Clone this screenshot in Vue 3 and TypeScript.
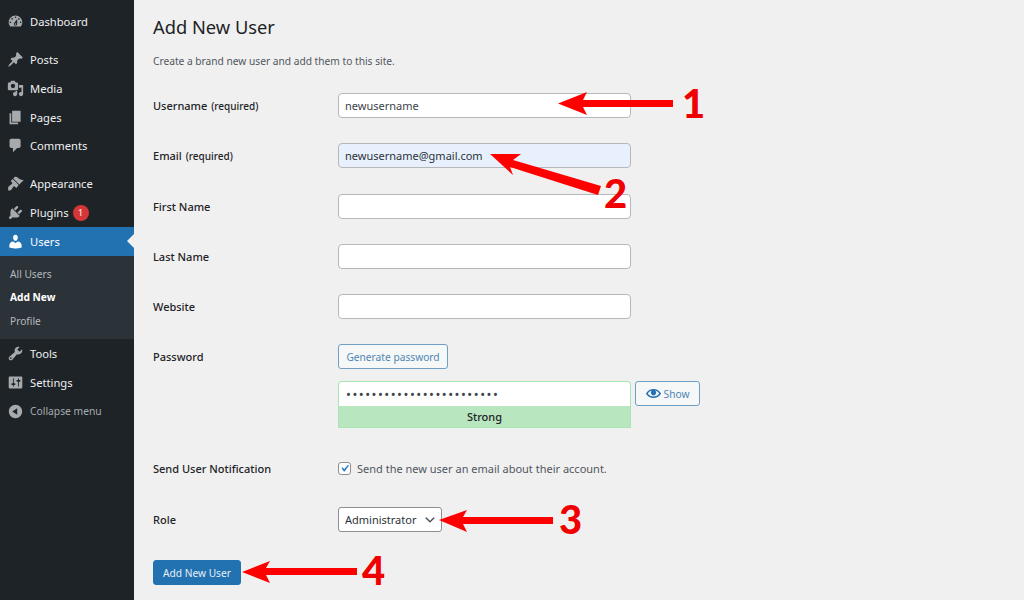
<script setup lang="ts">
interface MenuItem {
  label: string
  icon: string
  gap?: boolean
  badge?: string
  current?: boolean
}

const icons = {
  dashboard: 'M3.76 16h12.48c1.1-1.37 1.76-3.11 1.76-5 0-4.42-3.58-8-8-8s-8 3.58-8 8c0 1.89.66 3.63 1.76 5zM10 4c.55 0 1 .45 1 1s-.45 1-1 1-1-.45-1-1 .45-1 1-1zM6 6c.55 0 1 .45 1 1s-.45 1-1 1-1-.45-1-1 .45-1 1-1zm8 0c.55 0 1 .45 1 1s-.45 1-1 1-1-.45-1-1 .45-1 1-1zm-5.37 5.55L12 7v6c0 1.1-.9 2-2 2s-2-.9-2-2c0-.57.24-1.08.63-1.45zM4 10c.55 0 1 .45 1 1s-.45 1-1 1-1-.45-1-1 .45-1 1-1zm12 0c.55 0 1 .45 1 1s-.45 1-1 1-1-.45-1-1 .45-1 1-1zm-5 3c0-.55-.45-1-1-1s-1 .45-1 1 .45 1 1 1 1-.45 1-1z',
  posts: 'M10.44 3.02l1.82-1.82 6.36 6.35-1.83 1.82c-1.05-.68-2.48-.57-3.41.36l-.75.75c-.92.93-1.04 2.35-.35 3.41l-1.83 1.82-2.41-2.41-2.8 2.79c-.42.42-3.38 2.71-3.8 2.29s1.86-3.39 2.28-3.81l2.79-2.79L4.1 9.36l1.83-1.82c1.05.69 2.48.57 3.4-.36l.75-.75c.93-.92 1.05-2.35.36-3.41z',
  media: 'M13 11V4c0-.55-.45-1-1-1h-1.67L9 1H5L3.67 3H2c-.55 0-1 .45-1 1v7c0 .55.45 1 1 1h10c.55 0 1-.45 1-1zM7 4.5c1.38 0 2.5 1.12 2.5 2.5S8.38 9.5 7 9.5 4.5 8.38 4.5 7 5.62 4.5 7 4.5zM14 6h5v10.5c0 1.38-1.12 2.5-2.5 2.5S14 17.88 14 16.5s1.12-2.5 2.5-2.5c.17 0 .34.02.5.05V9h-3V6zm-4 8.05V13h2v3.5c0 1.38-1.12 2.5-2.5 2.5S7 17.88 7 16.5 8.12 14 9.5 14c.17 0 .34.02.5.05z',
  pages: 'M6 15V2h10v13H6zm-1 1h8v2H3V5h2v11z',
  comments: 'M5 2h9c1.1 0 2 .9 2 2v7c0 1.1-.9 2-2 2h-2l-5 5v-5H5c-1.1 0-2-.9-2-2V4c0-1.1.9-2 2-2z',
  appearance: 'M14.48 11.06L7.41 3.99l1.5-1.5c.5-.56 2.3-.47 3.51.32 1.21.8 1.43 1.28 2.91 2.1 1.18.64 2.45 1.26 4.45.85zm-.71.71L6.7 4.7 4.93 6.47c-.39.39-.39 1.02 0 1.41l1.06 1.06c.39.39.39 1.03 0 1.42-.6.6-1.43 1.11-2.21 1.69-.35.26-.7.53-1.01.84C1.43 13.23.99 15.01 1.5 18c.86.91 2.89.01 3.52-.64.52-.52.66-1.07 1.01-1.54.58-.78 1.09-1.61 1.69-2.21.39-.39 1.03-.39 1.42 0l1.06 1.06c.39.39 1.02.39 1.41 0z',
  plugins: 'M13.11 4.36L9.87 7.6 8 5.73l3.24-3.24c.35-.34 1.05-.2 1.56.32.52.51.66 1.21.31 1.55zm-8 1.77l.91-1.12 9.01 9.01-1.19.84c-.71.71-2.63 1.16-3.82 1.16H6.14L4.9 17.26c-.59.59-1.54.59-2.12 0-.59-.58-.59-1.53 0-2.12l1.24-1.24v-3.88c0-1.13.4-3.19 1.09-3.89zm7.26 3.97l3.24-3.24c.34-.35 1.04-.21 1.55.31.52.51.66 1.21.31 1.55l-3.24 3.25z',
  users: 'M10 9.25c-2.27 0-2.73-3.44-2.73-3.44C7 4.02 7.82 2 9.97 2c2.16 0 2.98 2.02 2.71 3.81 0 0-.41 3.44-2.68 3.44zm0 2.57L12.72 10c2.39 0 4.52 2.33 4.52 4.53v2.49s-3.65 1.13-7.24 1.13c-3.65 0-7.24-1.13-7.24-1.13v-2.49c0-2.25 1.94-4.48 4.47-4.48z',
  tools: 'M16.68 9.77c-1.34 1.34-3.3 1.67-4.95.99l-5.41 6.52c-.99.99-2.59.99-3.58 0s-.99-2.59 0-3.57l6.52-5.42c-.68-1.65-.35-3.61.99-4.95 1.28-1.28 3.12-1.62 4.72-1.06l-2.89 2.89 2.82 2.82 2.86-2.87c.53 1.58.18 3.39-1.08 4.65zM3.81 16.21c.4.39 1.04.39 1.43 0 .4-.4.4-1.04 0-1.43-.39-.4-1.03-.4-1.43 0-.39.39-.39 1.03 0 1.43z',
  settings: 'M18 16V4c0-.55-.45-1-1-1H3c-.55 0-1 .45-1 1v12c0 .55.45 1 1 1h14c.55 0 1-.45 1-1zM8 11h1c.55 0 1 .45 1 1s-.45 1-1 1H8v1.5c0 .28-.22.5-.5.5s-.5-.22-.5-.5V13H6c-.55 0-1-.45-1-1s.45-1 1-1h1V5.5c0-.28.22-.5.5-.5s.5.22.5.5V11zm5-2h-1c-.55 0-1-.45-1-1s.45-1 1-1h1V5.5c0-.28.22-.5.5-.5s.5.22.5.5V7h1c.55 0 1 .45 1 1s-.45 1-1 1h-1v5.5c0 .28-.22.5-.5.5s-.5-.22-.5-.5V9z',
  collapse: 'M10 2.16c4.33 0 7.84 3.51 7.84 7.84s-3.51 7.84-7.84 7.84S2.16 14.33 2.16 10 5.71 2.16 10 2.16zm2 11.72V6.12L6.18 9.97z',
}

const eye = 'M19.7 9.4C17.7 6 14 3.9 10 3.9S2.3 6 .3 9.4L0 10l.3.6c2 3.4 5.7 5.5 9.7 5.5s7.7-2.1 9.7-5.5l.3-.6-.3-.6zM10 14.1c-3.1 0-6-1.6-7.7-4.1C3.6 8 5.7 6.6 8 6.1c-.9.6-1.5 1.7-1.5 2.9 0 1.9 1.6 3.5 3.5 3.5s3.5-1.6 3.5-3.5c0-1.2-.6-2.3-1.5-2.9 2.3.5 4.4 1.9 5.7 3.9-1.7 2.5-4.6 4.1-7.7 4.1z'

const topMenu: MenuItem[] = [
  { label: 'Dashboard', icon: icons.dashboard },
  { label: 'Posts', icon: icons.posts, gap: true },
  { label: 'Media', icon: icons.media },
  { label: 'Pages', icon: icons.pages },
  { label: 'Comments', icon: icons.comments },
  { label: 'Appearance', icon: icons.appearance, gap: true },
  { label: 'Plugins', icon: icons.plugins, badge: '1' },
  { label: 'Users', icon: icons.users, current: true },
]

const bottomMenu: MenuItem[] = [
  { label: 'Tools', icon: icons.tools },
  { label: 'Settings', icon: icons.settings },
]

const textRows = [
  { label: 'Username', required: true, value: 'newusername', filled: false },
  { label: 'Email', required: true, value: 'newusername@gmail.com', filled: true },
  { label: 'First Name', required: false, value: '', filled: false },
  { label: 'Last Name', required: false, value: '', filled: false },
  { label: 'Website', required: false, value: '', filled: false },
]

const arrows = [
  '558,103.5 587,92 583,100 673,100 673,107 583,107 587,115',
  '490,154 521,154 513,160 601,186 598,195 510,167 513,175',
  '439,520 467,510 463,517 553,517 553,524 463,524 467,532',
  '242,572 270,561 266,568 357,568 357,575 266,575 270,583',
]

const marks = [
  { n: '1', cls: 'mark-1' },
  { n: '2', cls: 'mark-2' },
  { n: '3', cls: 'mark-3' },
  { n: '4', cls: 'mark-4' },
]
</script>

<template>
  <div class="page">
    <aside class="side">
      <nav class="menu">
        <a
          v-for="item in topMenu"
          :key="item.label"
          class="menu-item"
          :class="{ 'menu-gap': item.gap, 'menu-current': item.current }"
        >
          <svg class="menu-icon" viewBox="0 0 20 20" aria-hidden="true"><path :d="item.icon" /></svg>
          <span>{{ item.label }}</span>
          <span v-if="item.badge" class="badge">{{ item.badge }}</span>
        </a>
        <div class="submenu">
          <a class="sub-item">All Users</a>
          <a class="sub-item sub-current">Add New</a>
          <a class="sub-item">Profile</a>
        </div>
        <a v-for="item in bottomMenu" :key="item.label" class="menu-item">
          <svg class="menu-icon" viewBox="0 0 20 20" aria-hidden="true"><path :d="item.icon" /></svg>
          <span>{{ item.label }}</span>
        </a>
        <a class="menu-item menu-collapse">
          <svg class="menu-icon" viewBox="0 0 20 20" aria-hidden="true"><path :d="icons.collapse" /></svg>
          <span>Collapse menu</span>
        </a>
      </nav>
    </aside>

    <main class="main">
      <h1 class="title">Add New User</h1>
      <p class="desc">Create a brand new user and add them to this site.</p>

      <form class="form" @submit.prevent>
        <div v-for="row in textRows" :key="row.label" class="row">
          <label class="row-label">
            {{ row.label }}
            <span v-if="row.required" class="req">(required)</span>
          </label>
          <input class="field" :class="{ 'field-filled': row.filled }" type="text" :value="row.value" />
        </div>

        <div class="row row-password">
          <label class="row-label">Password</label>
          <div class="pw-col">
            <button type="button" class="btn btn-generate">Generate password</button>
            <div class="pw-line">
              <div class="pw-box">
                <input class="field pw-input" type="password" value="abcdefghijklmnopqrstuvwx" />
                <div class="pw-strength">Strong</div>
              </div>
              <button type="button" class="btn btn-show">
                <svg class="eye" viewBox="0 0 20 20" aria-hidden="true"><path :d="eye" /></svg>
                Show
              </button>
            </div>
          </div>
        </div>

        <div class="row row-notify">
          <label class="row-label">Send User Notification</label>
          <div class="notify">
            <span class="check">
              <svg viewBox="0 0 20 20" aria-hidden="true"><path d="M14.83 4.89l1.34.94-5.81 8.38H9.02L5.78 9.67l1.34-1.25 2.57 2.4z" /></svg>
            </span>
            <span>Send the new user an email about their account.</span>
          </div>
        </div>

        <div class="row row-role">
          <label class="row-label">Role</label>
          <select class="role">
            <option>Administrator</option>
          </select>
        </div>

        <button type="submit" class="btn-primary">Add New User</button>
      </form>
    </main>

    <svg class="arrows" viewBox="0 0 1024 600" aria-hidden="true">
      <polygon v-for="a in arrows" :key="a" :points="a" />
    </svg>
    <span v-for="m in marks" :key="m.n" class="mark" :class="m.cls">{{ m.n }}</span>
  </div>
</template>

<style scoped>
.page {
  position: relative;
  display: flex;
  width: 1024px;
  height: 600px;
  overflow: hidden;
  background: #f0f0f0;
  color: #1d2327;
  font-family: "Noto Sans", "Open Sans", sans-serif;
  font-size: 11px;
}

.side {
  width: 134px;
  flex-shrink: 0;
  background: #1d2327;
}

.menu {
  display: flex;
  flex-direction: column;
  padding-top: 7.2px;
}

.menu-item {
  position: relative;
  display: flex;
  align-items: center;
  height: 28.8px;
  padding-left: 7px;
  color: #f0f0f1;
  font-size: 11.2px;
}

.menu-gap { margin-top: 9.2px; }

.menu-icon {
  width: 17px;
  height: 17px;
  margin-right: 6px;
  fill: #a7aaad;
  flex-shrink: 0;
}

.menu-current {
  background: #2271b1;
  color: #fff;
}
.menu-current .menu-icon { fill: #fff; }
.menu-current::after {
  content: "";
  position: absolute;
  right: 0;
  top: 7px;
  border: 7px solid transparent;
  border-right-color: #f0f0f0;
  border-left-width: 0;
}

.badge {
  display: flex;
  align-items: center;
  justify-content: center;
  width: 16px;
  height: 16px;
  margin-left: 4px;
  border-radius: 50%;
  background: #d63638;
  color: #fff;
  font-size: 9px;
}

.submenu {
  box-sizing: border-box;
  display: flex;
  flex-direction: column;
  height: 83.3px;
  padding-top: 7px;
  background: #2c3338;
}

.sub-item {
  height: 23.5px;
  line-height: 23.5px;
  padding-left: 10px;
  color: #b4b9be;
  font-size: 10.2px;
}

.sub-current {
  color: #fff;
  font-weight: 700;
}

.menu-collapse {
  color: #a7aaad;
  font-size: 10.3px;
}

.main {
  flex: 1;
  padding: 14px 0 0 19px;
}

.title {
  margin: 0;
  font-size: 18.3px;
  font-weight: 400;
  line-height: 26px;
}

.desc {
  margin: 13px 0 0;
  color: #50575e;
  font-size: 10.2px;
  line-height: 16px;
}

.form {
  display: flex;
  flex-direction: column;
  align-items: flex-start;
  margin-top: 24px;
}

.row {
  display: flex;
  align-items: flex-start;
  margin-bottom: 25.3px;
}

.row-label {
  width: 185px;
  height: 25px;
  flex-shrink: 0;
  font-weight: 500;
  line-height: 25px;
  color: #1d2327;
}

.req {
  font-size: 10px;
  font-weight: 500;
  line-height: 1;
  margin-left: 1px;
}

.field {
  box-sizing: border-box;
  width: 293px;
  height: 25px;
  margin: 0;
  padding: 0 6px;
  border: 1px solid #b5b7ba;
  border-radius: 4px;
  background: #fff;
  color: #3c434a;
  font: inherit;
  outline: none;
}

.field-filled {
  background: #e8f0fe;
  color: #2c3338;
}

.row-password { margin-bottom: 28px; }

.pw-col {
  display: flex;
  flex-direction: column;
  align-items: flex-start;
  gap: 12px;
}

.pw-line {
  display: flex;
  align-items: flex-start;
  gap: 4px;
}

.pw-box { width: 293px; }

.pw-input {
  display: block;
  padding-left: 7px;
  border-color: #a9e4b3;
  border-bottom: 0;
  border-radius: 4px 4px 0 0;
  font-size: 13px;
  letter-spacing: 1.5px;
}

.pw-strength {
  box-sizing: border-box;
  height: 22px;
  border: 1px solid #a9e4b3;
  border-top: 0;
  background: #b8e6bf;
  color: #1d2327;
  font-weight: 500;
  line-height: 22px;
  text-align: center;
}

.btn {
  display: inline-flex;
  align-items: center;
  box-sizing: border-box;
  height: 25px;
  padding: 0 8px;
  border: 1px solid #6f9fc6;
  border-radius: 3px;
  background: #f6f7f7;
  color: #4f86b5;
  font: inherit;
  font-size: 10.2px;
}

.btn-generate {
  width: 110px;
  justify-content: center;
  padding: 0;
}

.btn-show {
  width: 65px;
  padding: 0;
  justify-content: center;
  gap: 3px;
}

.eye {
  width: 15px;
  height: 15px;
  fill: #2271b1;
}

.row-notify { margin-bottom: 26px; }

.notify {
  display: flex;
  align-items: center;
  gap: 6px;
  height: 25px;
  color: #50575e;
}

.check {
  box-sizing: border-box;
  display: flex;
  width: 13px;
  height: 13px;
  border: 1px solid #8c8f94;
  border-radius: 3px;
  background: #fff;
}
.check svg {
  width: 100%;
  height: 100%;
  fill: #3582c4;
  transform: scale(1.3);
}

.row-role { margin-bottom: 28px; }

.role {
  box-sizing: border-box;
  width: 104px;
  height: 25px;
  padding: 0 0 0 6px;
  border: 1px solid #8c8f94;
  border-radius: 3px;
  appearance: none;
  background: #fff url("data:image/svg+xml,%3Csvg xmlns='http://www.w3.org/2000/svg' viewBox='0 0 20 20'%3E%3Cpath d='M5 6l5 5 5-5 2 1-7 7-7-7z' fill='%2350575e'/%3E%3C/svg%3E") no-repeat right 4px center / 14px 14px;
  color: #2c3338;
  font: inherit;
}

.btn-primary {
  box-sizing: border-box;
  width: 88px;
  height: 25px;
  padding: 0;
  border: 1px solid #2271b1;
  border-radius: 3px;
  background: #2271b1;
  color: #e6f0f8;
  font: inherit;
  font-size: 10.2px;
}

.arrows {
  position: absolute;
  inset: 0;
  width: 1024px;
  height: 600px;
  pointer-events: none;
  fill: #ff0000;
}

.mark {
  position: absolute;
  color: #f00000;
  font-family: Lato, sans-serif;
  font-size: 40px;
  font-weight: 900;
  line-height: 40px;
}
.mark-1 { left: 682px; top: 83px; }
.mark-2 { left: 604px; top: 173px; }
.mark-3 { left: 559px; top: 499px; }
.mark-4 { left: 362px; top: 550px; }
</style>
